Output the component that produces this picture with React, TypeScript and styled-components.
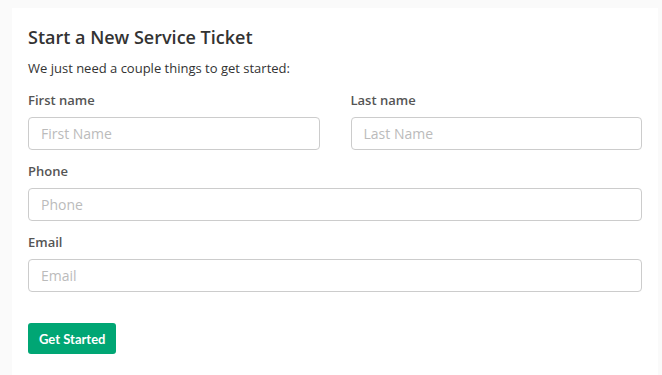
import styled, { createGlobalStyle } from "styled-components";

const GlobalStyle = createGlobalStyle`
	body {
		margin: 0;
		background: #fafafa;
		font-family: "Open Sans", "Noto Sans", sans-serif;
		color: #333;
	}
`;

type FieldType = {
	label: string;
	placeholder: string;
};

const nameFields: FieldType[] = [
	{ label: "First name", placeholder: "First Name" },
	{ label: "Last name", placeholder: "Last Name" },
];

const contactFields: FieldType[] = [
	{ label: "Phone", placeholder: "Phone" },
	{ label: "Email", placeholder: "Email" },
];

function Field({ label, placeholder }: FieldType) {
	return (
		<Group>
			<Label>{label}</Label>
			<Input placeholder={placeholder} />
		</Group>
	);
}

export default function App() {
	return (
		<>
			<GlobalStyle />
			<Card>
				<Title>Start a New Service Ticket</Title>
				<Intro>We just need a couple things to get started:</Intro>
				<Row>
					{nameFields.map((field) => (
						<Field key={field.label} {...field} />
					))}
				</Row>
				{contactFields.map((field) => (
					<Field key={field.label} {...field} />
				))}
				<Button>Get Started</Button>
			</Card>
		</>
	);
}

const Card = styled.div`
	margin: 8px 4px 0 12px;
	padding: 16px 16px 24px;
	background: #fff;
	min-height: 100vh;
	box-sizing: border-box;
`;

const Title = styled.h2`
	margin: 0;
	font-size: 18px;
	font-weight: 600;
	line-height: 26px;
	color: #333;
`;

const Intro = styled.p`
	margin: 9px 0 2px;
	font-size: 13px;
	line-height: 18px;
	color: #333;
`;

const Row = styled.div`
	display: grid;
	grid-template-columns: 1fr 1fr;
	column-gap: 31px;
`;

const Group = styled.div`
	margin-top: 12px;
`;

const Label = styled.label`
	display: block;
	font-size: 13px;
	font-weight: 600;
	line-height: 18px;
	color: #555;
	margin-bottom: 8px;
`;

const Input = styled.input`
	display: block;
	width: 100%;
	box-sizing: border-box;
	height: 33px;
	padding: 0 12px;
	border: 1px solid #ccc;
	border-radius: 4px;
	font-family: "Open Sans", "Noto Sans", sans-serif;
	font-size: 14px;
	color: #333;
	outline: none;

	&::placeholder {
		color: #bbb;
	}
`;

const Button = styled.button`
	display: block;
	margin-top: 31px;
	height: 31px;
	padding: 0 11px;
	border: none;
	border-radius: 3px;
	background: #00a674;
	color: #fff;
	font-family: "Lato", "Open Sans", sans-serif;
	font-size: 13px;
	font-weight: 700;
	cursor: pointer;
`;
